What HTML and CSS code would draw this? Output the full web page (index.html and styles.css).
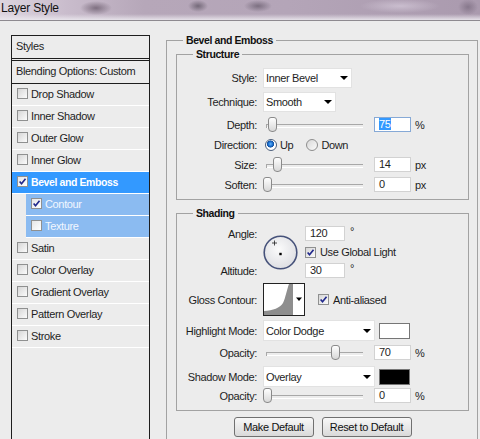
FILE: index.html
```html
<!DOCTYPE html>
<html lang="en">

<head>
    <meta charset="UTF-8">
    <title>Layer Style</title>
    <link rel="stylesheet" href="styles.css">
</head>

<body>
    <div class="titlebar"><span class="title">Layer Style</span></div>

    <div class="dialog">
        <!-- Styles list -->
        <div class="styles">
            <div class="styles-head">Styles</div>
            <div class="styles-blend">Blending Options: Custom</div>
            <ul class="style-list">
                <li><span class="cb"></span>Drop Shadow</li>
                <li><span class="cb"></span>Inner Shadow</li>
                <li><span class="cb"></span>Outer Glow</li>
                <li><span class="cb"></span>Inner Glow</li>
                <li class="selected"><span class="cb"><svg viewBox="0 0 11 11"><path d="M2 5.5 L4.3 8.3 L9.2 2" /></svg></span>Bevel and Emboss</li>
                <li class="sub"><span class="cb"><svg viewBox="0 0 11 11"><path d="M2 5.5 L4.3 8.3 L9.2 2" /></svg></span>Contour</li>
                <li class="sub"><span class="cb"></span>Texture</li>
                <li><span class="cb"></span>Satin</li>
                <li><span class="cb"></span>Color Overlay</li>
                <li><span class="cb"></span>Gradient Overlay</li>
                <li><span class="cb"></span>Pattern Overlay</li>
                <li><span class="cb"></span>Stroke</li>
            </ul>
        </div>

        <fieldset class="group">
            <legend>Bevel and Emboss</legend>

            <fieldset class="sub-group structure">
                <legend>Structure</legend>

                <div class="row row-select">
                    <span class="label">Style:</span>
                    <div class="select style-select"><span>Inner Bevel</span><i class="arrow"></i></div>
                </div>
                <div class="row row-select">
                    <span class="label">Technique:</span>
                    <div class="select technique-select"><span>Smooth</span><i class="arrow"></i></div>
                </div>
                <div class="row">
                    <span class="label">Depth:</span>
                    <div class="slider"><span class="thumb" style="left: 6px"></span></div>
                    <div class="num focused"><span class="sel-text">75</span></div>
                    <span class="unit">%</span>
                </div>
                <div class="row">
                    <span class="label">Direction:</span>
                    <span class="radio on"></span><span class="radio-text">Up</span>
                    <span class="radio down"></span><span class="radio-text">Down</span>
                </div>
                <div class="row">
                    <span class="label">Size:</span>
                    <div class="slider"><span class="thumb" style="left: 11px"></span></div>
                    <div class="num">14</div>
                    <span class="unit">px</span>
                </div>
                <div class="row">
                    <span class="label">Soften:</span>
                    <div class="slider"><span class="thumb" style="left: 1px"></span></div>
                    <div class="num">0</div>
                    <span class="unit">px</span>
                </div>
            </fieldset>

            <fieldset class="sub-group shading">
                <legend>Shading</legend>

                <div class="angle-block">
                    <span class="label angle-label">Angle:</span>
                    <svg class="dial" width="35" height="35" viewBox="0 0 35 35">
                        <defs>
                            <radialGradient id="dialFill" cx="45%" cy="40%" r="60%">
                                <stop offset="0" stop-color="#fbfbfb" />
                                <stop offset="1" stop-color="#dedfe3" />
                            </radialGradient>
                        </defs>
                        <circle cx="17.5" cy="17.5" r="16.3" fill="url(#dialFill)" stroke="#46527a" stroke-width="1.6" />
                        <path d="M11.5 5.5 V10.5 M9 8 H14" stroke="#222" stroke-width="0.8" />
                        <rect x="16.3" y="17.8" width="2.4" height="2.4" fill="#000" />
                    </svg>
                    <div class="deg">
                        <div class="num wide">120</div><span class="unit degree">°</span>
                    </div>
                    <div class="check-line">
                        <span class="cb"><svg viewBox="0 0 11 11"><path d="M2 5.5 L4.3 8.3 L9.2 2" /></svg></span>
                        <span class="check-text">Use Global Light</span>
                    </div>
                    <span class="label altitude-label">Altitude:</span>
                    <div class="deg altitude">
                        <div class="num wide">30</div><span class="unit degree">°</span>
                    </div>
                </div>

                <div class="row gloss-row">
                    <span class="label">Gloss Contour:</span>
                    <svg class="contour" width="42" height="33" viewBox="0 0 42 33">
                        <rect x="0.5" y="0.5" width="41" height="32" fill="#fff" stroke="#222" />
                        <path d="M1 32 V28 C10 27.5 17 25 20 20 C22.5 15 24 6 26 1 H30 V32 Z" fill="#8e8e8e" />
                        <path d="M33 14.5 H39 L36 18 Z" fill="#000" />
                    </svg>
                    <span class="cb anti"><svg viewBox="0 0 11 11"><path d="M2 5.5 L4.3 8.3 L9.2 2" /></svg></span>
                    <span class="check-text">Anti-aliased</span>
                </div>

                <div class="row mode-row">
                    <span class="label">Highlight Mode:</span>
                    <div class="select mode-select"><span>Color Dodge</span><i class="arrow"></i></div>
                    <span class="swatch white"></span>
                </div>
                <div class="row opacity-row">
                    <span class="label">Opacity:</span>
                    <div class="slider"><span class="thumb" style="left: 69px"></span></div>
                    <div class="num">70</div>
                    <span class="unit">%</span>
                </div>
                <div class="row mode-row shadow-row">
                    <span class="label">Shadow Mode:</span>
                    <div class="select mode-select"><span>Overlay</span><i class="arrow"></i></div>
                    <span class="swatch black"></span>
                </div>
                <div class="row last-opacity">
                    <span class="label">Opacity:</span>
                    <div class="slider"><span class="thumb" style="left: 1px"></span></div>
                    <div class="num">0</div>
                    <span class="unit">%</span>
                </div>
            </fieldset>

            <div class="buttons">
                <button class="btn make">Make Default</button>
                <button class="btn reset">Reset to Default</button>
            </div>
        </fieldset>
    </div>
</body>

</html>
```

FILE: styles.css
```css
* {
    margin: 0;
    padding: 0;
    box-sizing: border-box;
}

body {
    width: 480px;
    height: 439px;
    overflow: hidden;
    background-color: #ececec;
    font-family: "Liberation Sans", Arial, sans-serif;
    font-size: 11px;
    letter-spacing: -0.35px;
    color: #1e1e1e;
}

/* Title bar */
.titlebar {
    height: 21px;
    border-bottom: 1px solid #8e8a90;
    background:
        radial-gradient(ellipse 16px 7px at 96px 8px, rgba(110, 95, 112, 0.8), transparent),
        radial-gradient(ellipse 10px 6px at 198px 6px, rgba(100, 90, 105, 0.8), transparent),
        radial-gradient(ellipse 14px 6px at 258px 6px, rgba(110, 98, 115, 0.8), transparent),
        radial-gradient(ellipse 40px 7px at 400px 6px, rgba(220, 210, 225, 0.6), transparent),
        radial-gradient(ellipse 10px 8px at 468px 7px, rgba(120, 105, 125, 0.7), transparent),
        linear-gradient(180deg, rgba(255, 255, 255, 0) 70%, rgba(235, 232, 238, 0.9) 100%),
        linear-gradient(90deg, #ddd5df 0, #c9bccc 14%, #b6a7b9 30%, #b4a5b8 60%, #aa9aae 100%);
}

.title {
    display: block;
    font-size: 12px;
    letter-spacing: -0.2px;
    line-height: 17px;
    padding-left: 1px;
    color: #111;
}

.dialog {
    display: flex;
    align-items: flex-start;
    padding: 12px 0 0 11px;
}

/* Styles list */
.styles {
    width: 139px;
    height: 420px;
    margin-top: 2px;
    border: 1px solid #1e1e1e;
    flex: none;
}

.styles-head {
    height: 25px;
    line-height: 21px;
    padding-left: 4px;
    border-bottom: 3px double #1e1e1e;
}

.styles-blend {
    height: 23px;
    line-height: 21px;
    padding-left: 4px;
    border-bottom: 1px solid #1e1e1e;
}

.style-list {
    list-style: none;
}

.style-list li {
    height: 22px;
    display: flex;
    align-items: center;
    padding: 0 0 2px 5px;
    border-bottom: 1px solid #fff;
}

.style-list li.selected {
    background-color: #3399ff;
    color: #fff;
    font-weight: bold;
    font-size: 10.5px;
    letter-spacing: -0.4px;
}

.style-list li.sub {
    margin-left: 14px;
    background-color: #8bbbf1;
    color: #f2f7ff;
}

.cb {
    width: 11px;
    height: 11px;
    flex: none;
    margin-right: 3px;
    border: 1px solid #8f9090;
    background: linear-gradient(135deg, #d6d6d6, #fbfbfb);
}

.selected .cb,
.sub .cb {
    background: linear-gradient(135deg, #e6e6e6, #ffffff);
}

.cb svg {
    display: block;
    width: 9px;
    height: 9px;
}

.cb path {
    fill: none;
    stroke: #20288c;
    stroke-width: 2;
}

/* Group boxes */
.group {
    margin-left: 16px;
    width: 312px;
    height: 420px;
    flex: none;
    border: 1px solid #a2a2a2;
    padding: 0 8px 0 9px;
    min-inline-size: 0;
}

legend {
    background-color: #ececec;
    font-weight: bold;
    font-size: 10.5px;
    letter-spacing: -0.4px;
    line-height: 14px;
    color: #111;
}

.group > legend {
    margin-left: 7px;
    padding: 0 3px;
}

.sub-group {
    border: 1px solid #a2a2a2;
    padding: 0 0 7px 0;
    min-inline-size: 0;
}

.sub-group > legend {
    margin-left: 16px;
    padding: 0 3px;
}

.structure {
    padding-top: 2px;
}

.shading {
    margin-top: 6px;
}

.row {
    display: flex;
    align-items: center;
    height: 15px;
    margin-top: 5px;
}

.row-select {
    height: 20px;
}

.row-select + .row-select {
    margin-top: 4px;
}

.label {
    width: 80px;
    margin-right: 6px;
    text-align: right;
    flex: none;
    white-space: nowrap;
}

/* Drop-down fields */
.select {
    display: flex;
    align-items: center;
    justify-content: space-between;
    height: 100%;
    background-color: #fff;
    border: 1px solid #e2e2e2;
    padding: 0 3px 0 2px;
    flex: none;
}

.style-select {
    width: 89px;
}

.technique-select {
    width: 73px;
}

.mode-select {
    width: 112px;
}

.arrow {
    width: 0;
    height: 0;
    border-left: 4px solid transparent;
    border-right: 4px solid transparent;
    border-top: 4px solid #000;
}

/* Sliders */
.slider {
    position: relative;
    width: 101px;
    height: 15px;
    margin-left: -1px;
    flex: none;
}

.slider::before {
    content: "";
    position: absolute;
    left: 4px;
    right: 0;
    top: 7px;
    height: 2px;
    border-top: 1px solid #a8a8a8;
    border-bottom: 1px solid #fff;
}

.slider::after {
    content: "";
    position: absolute;
    left: 4px;
    top: 7px;
    width: 1px;
    height: 4px;
    background-color: #a8a8a8;
}

.thumb {
    position: absolute;
    top: 0;
    width: 9px;
    height: 15px;
    z-index: 1;
    border: 1px solid #8a8a8a;
    border-radius: 3px 3px 4px 4px;
    background: linear-gradient(#fefefe, #d8d8d8);
}

/* Number fields */
.num {
    width: 37px;
    height: 15px;
    margin-left: 11px;
    padding-left: 4px;
    line-height: 13px;
    background-color: #fff;
    border: 1px solid #d2d2d2;
    flex: none;
}

.num.focused {
    border-color: #86a9d6;
}

.sel-text {
    background-color: #3399ff;
    color: #fff;
}

.num.wide {
    width: 40px;
    margin-left: 0;
}

.unit {
    margin-left: 4px;
}

.degree {
    align-self: flex-start;
    margin-left: 5px;
    line-height: 10px;
}

/* Radios */
.radio {
    width: 12px;
    height: 12px;
    flex: none;
    margin-left: 2px;
    border-radius: 50%;
    border: 1px solid #8e8e8e;
    background: linear-gradient(135deg, #d8d8d8, #fbfbfb);
}

.radio.on {
    border-color: #4c5f7c;
    background: radial-gradient(circle at 45% 40%, #5fb5ff 0, #1a6ccc 2.3px, #0f4f9e 3.3px, #fff 3.8px);
}

.radio.down {
    margin-left: 13px;
}

.radio-text {
    margin-left: 3px;
}

/* Angle and altitude */
.angle-block {
    display: grid;
    grid-template-columns: 86px 42px 1fr;
    grid-template-rows: 17px 18px 17px;
    row-gap: 1px;
    align-items: center;
    margin-top: 5px;
}

.angle-label {
    grid-column: 1;
    grid-row: 1;
}

.altitude-label {
    grid-column: 1;
    grid-row: 3;
}

.dial {
    grid-column: 2;
    grid-row: 1 / 4;
    display: block;
}

.deg {
    grid-column: 3;
    display: flex;
    height: 15px;
}

.altitude {
    grid-row: 3;
}

.check-line {
    grid-column: 3;
    grid-row: 2;
    display: flex;
    align-items: center;
}

.check-text {
    margin-left: 1px;
}

.gloss-row {
    height: 33px;
    margin-top: 4px;
}

.contour {
    display: block;
    flex: none;
}

.cb.anti {
    margin-left: 13px;
}

.mode-row {
    height: 21px;
    margin-top: 4px;
}

.opacity-row {
    margin-top: 4px;
}

.shadow-row {
    margin-top: 6px;
}

.last-opacity {
    margin-top: 1px;
}

.swatch {
    width: 31px;
    height: 16px;
    margin-left: 4px;
    border: 1px solid #767676;
    flex: none;
}

.swatch.white {
    background-color: #fff;
}

.swatch.black {
    background-color: #000;
}

/* Buttons */
.buttons {
    display: flex;
    justify-content: center;
    gap: 8px;
    margin-top: 6px;
}

.btn {
    height: 20px;
    font-family: inherit;
    font-size: 11px;
    letter-spacing: -0.35px;
    color: #111;
    border: 1px solid #707070;
    border-radius: 3px;
    background: linear-gradient(#f7f7f7, #e9e9e9 50%, #d9d9d9);
}

.make {
    width: 80px;
}

.reset {
    width: 90px;
}
```
